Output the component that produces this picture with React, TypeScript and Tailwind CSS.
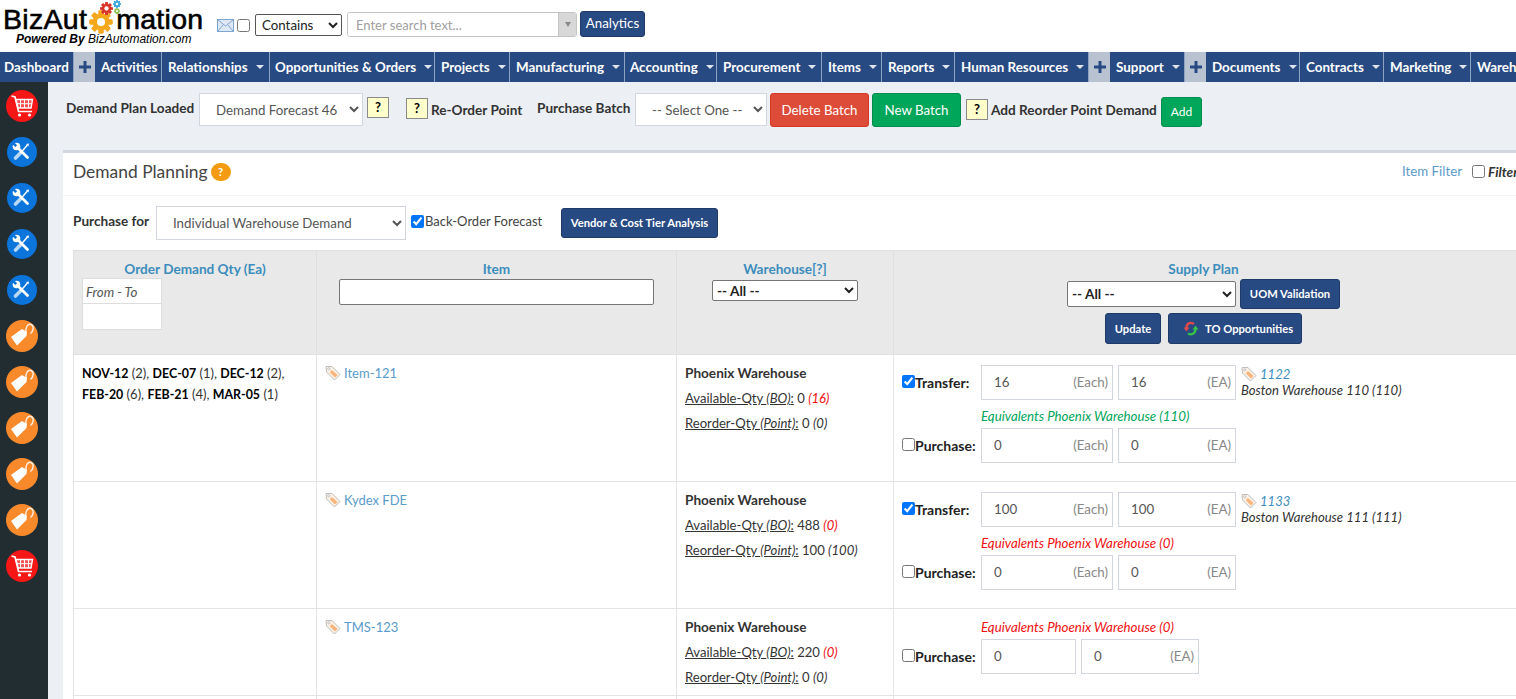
// top menu, widths read from the screenshot
const NAV = [
  { label: 'Dashboard', w: 'w-[74px] pl-[4px]', caret: false },
  { plus: true },
  { label: 'Activities', w: 'w-[67px] pl-[6px]', caret: false },
  { label: 'Relationships', w: 'w-[108px] pl-[6px]', caret: true },
  { label: 'Opportunities & Orders', w: 'w-[165px] pl-[5px]', caret: true },
  { label: 'Projects', w: 'w-[75px] pl-[6px]', caret: true },
  { label: 'Manufacturing', w: 'w-[115px] pl-[6px]', caret: true },
  { label: 'Accounting', w: 'w-[92px] pl-[5px]', caret: true },
  { label: 'Procurement', w: 'w-[105px] pl-[6px]', caret: true },
  { label: 'Items', w: 'w-[60px] pl-[6px]', caret: true },
  { label: 'Reports', w: 'w-[73px] pl-[6px]', caret: true },
  { label: 'Human Resources', w: 'w-[134px] pl-[6px]', caret: true },
  { plus: true },
  { label: 'Support', w: 'w-[75px] pl-[6px]', caret: true },
  { plus: true },
  { label: 'Documents', w: 'w-[94px] pl-[6px]', caret: true },
  { label: 'Contracts', w: 'w-[84px] pl-[6px]', caret: true },
  { label: 'Marketing', w: 'w-[87px] pl-[6px]', caret: true },
  { label: 'Warehouses', w: 'w-[100px] pl-[6px]', caret: true },
];

const SIDE = ['cart', 'tool', 'tool', 'tool', 'tool', 'tag', 'tag', 'tag', 'tag', 'tag', 'cart'];

function Gear({ size, color, hole = 'white' }: { size: number; color: string; hole?: string }) {
  const teeth = [0, 45, 90, 135, 180, 225, 270, 315];
  return (
    <svg width={size} height={size} viewBox="0 0 24 24">
      {teeth.map((a) => (
        <rect key={a} x="9.5" y="0.5" width="5" height="23" rx="1" fill={color} transform={`rotate(${a} 12 12)`} />
      ))}
      <circle cx="12" cy="12" r="8.5" fill={color} />
      <circle cx="12" cy="12" r="4" fill={hole} />
    </svg>
  );
}

function Logo() {
  return (
    <div className="relative w-[205px] pl-[3px] leading-none">
      <div className="flex items-center font-['Liberation_Sans',sans-serif] text-[28.5px] leading-[32px] tracking-[0.3px] text-black [-webkit-text-stroke:0.6px_black]">
        <span>BizAut</span>
        <span className="w-[29px]" />
        <span>mation</span>
      </div>
      <div className="absolute left-[89px] top-[7px]">
        <Gear size={24} color="#f5a81c" />
      </div>
      <div className="absolute left-[100px] top-[-1px]">
        <Gear size={13} color="#d8352b" />
      </div>
      <div className="absolute left-[113px] top-[-3px]">
        <Gear size={8} color="#39a6dc" />
      </div>
      <div className="absolute left-[114px] top-[5px]">
        <Gear size={6} color="#8cc152" />
      </div>
      <div className="-mt-[2px] pl-[13px] font-['Liberation_Sans',sans-serif] text-[12px] italic leading-[13px] text-black">
        <span className="font-bold">Powered By</span> BizAutomation.com
      </div>
    </div>
  );
}

function SmallTag() {
  return (
    <svg width="16" height="16" viewBox="0 0 16 16" className="shrink-0">
      <path d="M1 1.5 L7 1.5 L15 9.5 L9.5 15 L1.5 7 Z" fill="#fdf0e4" stroke="#bdbdbd" strokeWidth="1" />
      <path d="M6 5.5 L7.5 5.5 L12.5 10 L10 12.5 L5 7.5 Z" fill="#f8b47c" />
      <circle cx="3.8" cy="3.8" r="1.1" fill="white" stroke="#a5a5a5" strokeWidth="0.6" />
    </svg>
  );
}

function SideIcon({ kind }: { kind: string }) {
  if (kind === 'cart') {
    return (
      <div className="flex h-8 w-8 items-center justify-center rounded-full bg-[#f51616]">
        <svg width="32" height="32" viewBox="0 0 32 32" fill="none" stroke="white">
          <path d="M5.5 6 L9 7 L12.5 21.5 L26 21.5" strokeWidth="1.6" />
          <path d="M10 9.5 L26.5 9.5 L25 18 L12 18 Z" fill="white" fillOpacity="0.25" strokeWidth="1.4" />
          <path d="M14.5 9.5 V18 M18.5 9.5 V18 M22.5 9.5 V18 M11 13.7 H26" strokeWidth="1" />
          <circle cx="13.5" cy="25" r="1.6" fill="white" stroke="none" />
          <circle cx="23.5" cy="25" r="1.6" fill="white" stroke="none" />
        </svg>
      </div>
    );
  }
  if (kind === 'tool') {
    return (
      <div className="flex h-[30px] w-[30px] items-center justify-center rounded-full bg-[#0b75dc]">
        <svg width="30" height="30" viewBox="0 0 30 30" fill="none" strokeLinecap="round">
          {/* screwdriver */}
          <path d="M8.5 21 L13.5 16" stroke="#b9d9f7" strokeWidth="3.6" />
          <path d="M14 15.5 L20 8.5" stroke="white" strokeWidth="1.4" />
          <path d="M19 7 L22 6.5 L21.5 9.5 Z" fill="white" />
          {/* wrench */}
          <path d="M10 10 L20.5 20.5" stroke="white" strokeWidth="2.8" />
          <circle cx="9.5" cy="9.5" r="3.8" fill="white" />
          <path d="M5.5 5.5 L9.2 9.2" stroke="#0b75dc" strokeWidth="2.6" strokeLinecap="butt" />
        </svg>
      </div>
    );
  }
  return (
    <div className="flex h-8 w-8 items-center justify-center rounded-full bg-[#f98a2c]">
      <svg width="32" height="32" viewBox="0 0 32 32">
        <path d="M5 17 L16 9 L21 12 L20.5 16 L11 25.5 Z" fill="white" />
        <path d="M20 13 C19 7 22 3.5 25 4.5 C28.5 6 27.5 11 24.5 13.5" fill="none" stroke="white" strokeWidth="1.4" opacity="0.85" />
      </svg>
    </div>
  );
}

function HelpBox({ className = '' }: { className?: string }) {
  return (
    <div className={`flex h-[21px] w-[22px] shrink-0 items-center justify-center border border-[#8a8a8a] bg-[#ffffcc] text-[13px] font-bold text-black ${className}`}>
      ?
    </div>
  );
}

function QtyBox({ value, unit, w }: { value: string; unit?: string; w: string }) {
  return (
    <div className={`flex h-[35px] items-center justify-between border border-[#d2d6de] bg-white pl-[12px] pr-[4px] text-[13.3px] text-[#555] ${w}`}>
      <span>{value}</span>
      {unit && <span className="text-[#888]">{unit}</span>}
    </div>
  );
}

function SupplyLine({ label, checked, children }: { label: string; checked?: boolean; children: React.ReactNode }) {
  return (
    <div className="flex items-start">
      <label className="flex w-[79px] items-center pt-[7px] text-[14px] font-bold text-[#222]">
        <input type="checkbox" defaultChecked={checked} className="m-0 mb-[3px] h-[13px] w-[13px]" />
        {label}
      </label>
      <div className="flex gap-[5px]">{children}</div>
    </div>
  );
}

function SourceLink({ id, wh }: { id: string; wh: string }) {
  return (
    <div className="ml-[5px] pt-[1px] text-[13.1px] leading-[16px] text-[#333]">
      <div className="flex items-center gap-[3px]">
        <SmallTag />
        <a className="italic text-[#3c8dbc]">{id}</a>
      </div>
      <div className="italic">{wh}</div>
    </div>
  );
}

function WarehouseCell({ avail, bo, reorder, point }: { avail: string; bo: string; reorder: string; point: string }) {
  return (
    <td className="border border-[#e4e4e4] px-[8px] pt-[6px] align-top text-[13.1px] leading-[25px] text-[#333]">
      <div className="text-[13.6px] font-bold">Phoenix Warehouse</div>
      <div>
        <span className="underline">Available-Qty <i>(BO)</i>:</span> {avail}{' '}
        <i className="text-[#f01010]">{bo}</i>
      </div>
      <div>
        <span className="underline">Reorder-Qty <i>(Point)</i>:</span> {reorder} <i>{point}</i>
      </div>
    </td>
  );
}

function ItemCell({ name }: { name: string }) {
  return (
    <td className="border border-[#e4e4e4] px-[8px] pt-[8px] align-top text-[13px] leading-[20px]">
      <div className="flex items-center gap-[3px] text-[#5a9bc9]">
        <SmallTag />
        {name}
      </div>
    </td>
  );
}

const th = 'border border-[#e0e0e0] px-[8px] pt-[10px] align-top text-center text-[13.6px] font-bold leading-[16px] text-[#3c8dbc]';
const navy = 'rounded-[3px] border border-[#1d3a69] bg-[#284a83] text-[11.2px] font-bold text-white';

export default function App() {
  return (
    <div className="flex h-[699px] w-[1516px] flex-col overflow-hidden bg-white font-[Lato,sans-serif] text-[13.3px] text-[#333]">
      {/* top bar */}
      <div className="flex h-[52px] shrink-0 items-start">
        <div className="pt-[3px]">
          <Logo />
        </div>
        <div className="ml-[12px] flex items-center pt-[11px]">
          <svg width="17" height="13" viewBox="0 0 17 13" className="mt-[2px] shrink-0">
            <rect x="0.5" y="0.5" width="16" height="12" fill="#dfe9f6" stroke="#7ea6d3" />
            <path d="M1 1 L8.5 7 L16 1 M1 12 L6 6 M16 12 L11 6" fill="none" stroke="#7ea6d3" />
          </svg>
          <input type="checkbox" className="ml-[3px] mt-[2px] h-[13px] w-[13px]" />
          <select className="ml-[5px] mt-[2px] h-[22px] w-[87px] rounded-[2px] border border-[#555] bg-white pl-[2px] text-[13.3px] text-[#222]">
            <option>Contains</option>
          </select>
          <div className="ml-[5px] flex h-[25px] w-[230px] overflow-hidden rounded-[3px] border border-[#c4c4c4]">
            <div className="flex-1 bg-white pl-[8px] text-[13px] leading-[25px] text-[#a0a0a0]">Enter search text...</div>
            <div className="flex w-[18px] items-center justify-center border-l border-[#c4c4c4] bg-[#d8d8d8]">
              <div className="h-0 w-0 border-x-[3px] border-t-[5px] border-x-transparent border-t-[#888]" />
            </div>
          </div>
          <button className="ml-[3px] h-[26px] w-[65px] rounded-[3px] border border-[#1d3a69] bg-[#284a83] text-[13.3px] text-white">Analytics</button>
        </div>
      </div>

      {/* main menu */}
      <div className="flex h-[30px] shrink-0 bg-[#284a83] text-[13.4px] font-bold text-white">
        {NAV.map((n, i) =>
          n.plus ? (
            <div key={i} className="flex w-[21px] shrink-0 items-center justify-center bg-[#b9c2d0]">
              <svg width="12" height="12" viewBox="0 0 12 12">
                <path d="M6 0 V12 M0 6 H12" stroke="#284a83" strokeWidth="3" />
              </svg>
            </div>
          ) : (
            <div key={i} className={`flex shrink-0 items-center gap-[8px] whitespace-nowrap border-r border-[#8ea2c2] ${n.w}`}>
              {n.label}
              {n.caret && <span className="h-0 w-0 border-x-[4px] border-t-[4px] border-x-transparent border-t-[#dfe5ee]" />}
            </div>
          ),
        )}
      </div>

      <div className="flex min-h-0 flex-1">
        {/* left icon rail */}
        <div className="flex w-[48px] shrink-0 flex-col bg-[#222d32] pl-[6px] pt-[1px]">
          {SIDE.map((k, i) => (
            <div key={i} className="flex h-[46px] w-[32px] shrink-0 items-center justify-center">
              <SideIcon kind={k} />
            </div>
          ))}
        </div>

        <div className="min-w-0 flex-1 bg-[#ecf0f5] pl-[15px]">
          {/* batch toolbar */}
          <div className="flex h-[68px] items-start pl-[3px] pt-[11px] text-[13.6px] font-bold text-[#333]">
            <span className="mr-[3px] mt-[5px] w-[130px] whitespace-nowrap">Demand Plan Loaded</span>
            <select className="h-[33px] w-[164px] border border-[#d2d6de] bg-white pl-[12px] text-[13.3px] font-normal text-[#555]">
              <option>Demand Forecast 46</option>
            </select>
            <HelpBox className="ml-[4px] mt-[4px]" />
            <HelpBox className="ml-[17px] mt-[5px]" />
            <span className="ml-[3px] mt-[7px] w-[106px] whitespace-nowrap">Re-Order Point</span>
            <span className="mr-[3px] mt-[5px] w-[95px] whitespace-nowrap">Purchase Batch</span>
            <select className="h-[33px] w-[132px] border border-[#d2d6de] bg-white pl-[12px] text-[13.3px] font-normal text-[#555]">
              <option>-- Select One --</option>
            </select>
            <button className="ml-[3px] h-[34px] w-[99px] rounded-[3px] border border-[#d73925] bg-[#dd4b39] pt-[1px] text-[13.3px] font-normal text-white">Delete Batch</button>
            <button className="ml-[3px] h-[34px] w-[89px] rounded-[3px] border border-[#008d4c] bg-[#00a65a] pt-[1px] text-[13.3px] font-normal text-white">New Batch</button>
            <HelpBox className="ml-[5px] mt-[6px]" />
            <span className="ml-[3px] mt-[7px] w-[167px] whitespace-nowrap">Add Reorder Point Demand</span>
            <button className="ml-[3px] mt-[4px] h-[30px] w-[41px] rounded-[3px] border border-[#008d4c] bg-[#00a65a] text-[12px] font-normal text-white">Add</button>
          </div>

          {/* card */}
          <div className="w-[1500px] border-t-[3px] border-[#d2d6de] bg-white">
            <div className="flex h-[43px] items-center border-b border-[#f4f4f4] pb-[4px] pl-[10px]">
              <span className="text-[17.4px] text-[#444]">Demand Planning</span>
              <span className="ml-[3px] flex h-[18px] w-[20px] items-center justify-center rounded-full bg-[#f39c12] text-[11px] font-bold text-white">?</span>
              <div className="ml-auto flex items-center pr-[47px]">
                <span className="text-[13.3px] text-[#5a9bc9]">Item Filter</span>
                <input type="checkbox" className="ml-[10px] h-[13px] w-[13px]" />
                <span className="ml-[3px] w-[28px] overflow-hidden text-[13.6px] font-bold italic text-[#333]">Filter</span>
              </div>
            </div>

            <div className="flex h-[54px] items-start pl-[10px] pt-[10px]">
              <span className="mt-[5px] w-[83px] text-[13.6px] font-bold text-[#333]">Purchase for</span>
              <select className="h-[34px] w-[250px] border border-[#d2d6de] bg-white pl-[12px] text-[13.3px] text-[#555]">
                <option>Individual Warehouse Demand</option>
              </select>
              <label className="ml-[5px] mt-[8px] flex h-[16px] w-[150px] items-center whitespace-nowrap text-[13px] text-[#444]">
                <input type="checkbox" defaultChecked className="m-0 mb-[2px] mr-[1px] h-[13px] w-[13px]" />
                Back-Order Forecast
              </label>
              <button className={`mt-[2px] h-[30px] w-[157px] ${navy}`}>Vendor &amp; Cost Tier Analysis</button>
            </div>

            <div className="pl-[10px]">
              <table className="w-[1444px] table-fixed border-collapse">
                <colgroup>
                  <col className="w-[243px]" />
                  <col className="w-[360px]" />
                  <col className="w-[217px]" />
                  <col className="w-[624px]" />
                </colgroup>
                <thead>
                  <tr className="h-[104px] bg-[#e9e9e9]">
                    <th className={th}>
                      Order Demand Qty (Ea)
                      <div className="mt-[1px] w-[80px] border border-[#ddd] bg-white text-left font-normal">
                        <div className="h-[25px] border-b border-[#ddd] pl-[3px] text-[13.3px] italic leading-[27px] text-[#555]">From - To</div>
                        <div className="h-[25px]" />
                      </div>
                    </th>
                    <th className={th}>
                      Item
                      <input className="mx-auto mt-[2px] block h-[26px] w-[315px] rounded-[2px] border border-[#767676] bg-white" />
                    </th>
                    <th className={th}>
                      Warehouse[?]
                      <select className="mt-[3px] h-[21px] w-[146px] rounded-[2px] border border-[#767676] bg-white text-left text-[13.6px] font-bold text-[#222]">
                        <option>-- All --</option>
                      </select>
                    </th>
                    <th className={th}>
                      <div className="pr-[4px]">
                        Supply Plan
                        <div className="mt-[2px] flex items-center justify-center gap-[4px]">
                          <select className="h-[26px] w-[169px] rounded-[2px] border border-[#767676] bg-white text-[13.6px] font-bold text-[#222]">
                            <option>-- All --</option>
                          </select>
                          <button className={`h-[30px] w-[100px] ${navy}`}>UOM Validation</button>
                        </div>
                        <div className="mt-[4px] flex items-center justify-center gap-[7px]">
                          <button className={`h-[31px] w-[56px] ${navy}`}>Update</button>
                          <button className={`flex h-[31px] w-[134px] items-center justify-start gap-[6px] pl-[14px] ${navy}`}>
                            <svg width="16" height="17" viewBox="0 0 16 17" fill="none">
                              <path d="M11 4 C7 1.5 3.5 3.5 3.5 8" stroke="#e0484a" strokeWidth="2.4" />
                              <path d="M0.5 7.5 L6.5 7.5 L3.5 11.5 Z" fill="#e0484a" />
                              <path d="M5 13.5 C9 15.5 12.5 13 12.5 9" stroke="#35c04a" strokeWidth="2.4" />
                              <path d="M9.5 9.5 L15.5 9.5 L12.5 5.5 Z" fill="#35c04a" />
                            </svg>
                            TO Opportunities
                          </button>
                        </div>
                      </div>
                    </th>
                  </tr>
                </thead>
                <tbody>
                  <tr className="h-[127px]">
                    <td className="border border-[#e4e4e4] px-[8px] pt-[8px] align-top text-[13px] leading-[20px] text-[#333] [&_b]:text-[12.4px] [&_b]:text-black">
                      <b>NOV-12</b> (2), <b>DEC-07</b> (1), <b>DEC-12</b> (2),
                      <br />
                      <b>FEB-20</b> (6), <b>FEB-21</b> (4), <b>MAR-05</b> (1)
                    </td>
                    <ItemCell name="Item-121" />
                    <WarehouseCell avail="0" bo="(16)" reorder="0" point="(0)" />
                    <td className="border border-[#e4e4e4] px-[8px] pt-[10px] align-top">
                      <div className="flex">
                        <SupplyLine label="Transfer:" checked>
                          <QtyBox value="16" unit="(Each)" w="w-[132px]" />
                          <QtyBox value="16" unit="(EA)" w="w-[118px]" />
                        </SupplyLine>
                        <SourceLink id="1122" wh="Boston Warehouse 110 (110)" />
                      </div>
                      <div className="mt-[6px] pl-[79px] text-[13.3px] italic leading-[20px] text-[#00a65a]">Equivalents Phoenix Warehouse (110)</div>
                      <div className="mt-[2px]">
                        <SupplyLine label="Purchase:">
                          <QtyBox value="0" unit="(Each)" w="w-[132px]" />
                          <QtyBox value="0" unit="(EA)" w="w-[118px]" />
                        </SupplyLine>
                      </div>
                    </td>
                  </tr>
                  <tr className="h-[127px]">
                    <td className="border border-[#e4e4e4]" />
                    <ItemCell name="Kydex FDE" />
                    <WarehouseCell avail="488" bo="(0)" reorder="100" point="(100)" />
                    <td className="border border-[#e4e4e4] px-[8px] pt-[10px] align-top">
                      <div className="flex">
                        <SupplyLine label="Transfer:" checked>
                          <QtyBox value="100" unit="(Each)" w="w-[132px]" />
                          <QtyBox value="100" unit="(EA)" w="w-[118px]" />
                        </SupplyLine>
                        <SourceLink id="1133" wh="Boston Warehouse 111 (111)" />
                      </div>
                      <div className="mt-[6px] pl-[79px] text-[13.3px] italic leading-[20px] text-[#f01010]">Equivalents Phoenix Warehouse (0)</div>
                      <div className="mt-[2px]">
                        <SupplyLine label="Purchase:">
                          <QtyBox value="0" unit="(Each)" w="w-[132px]" />
                          <QtyBox value="0" unit="(EA)" w="w-[118px]" />
                        </SupplyLine>
                      </div>
                    </td>
                  </tr>
                  <tr className="h-[87px]">
                    <td className="border border-[#e4e4e4]" />
                    <ItemCell name="TMS-123" />
                    <WarehouseCell avail="220" bo="(0)" reorder="0" point="(0)" />
                    <td className="border border-[#e4e4e4] px-[8px] pt-[8px] align-top">
                      <div className="pl-[79px] text-[13.3px] italic leading-[20px] text-[#f01010]">Equivalents Phoenix Warehouse (0)</div>
                      <div className="mt-[2px]">
                        <SupplyLine label="Purchase:">
                          <QtyBox value="0" w="w-[95px]" />
                          <QtyBox value="0" unit="(EA)" w="w-[118px]" />
                        </SupplyLine>
                      </div>
                    </td>
                  </tr>
                  <tr className="h-[40px]">
                    <td className="border border-[#e4e4e4]" />
                    <td className="border border-[#e4e4e4]" />
                    <td className="border border-[#e4e4e4]" />
                    <td className="border border-[#e4e4e4]" />
                  </tr>
                </tbody>
              </table>
            </div>
          </div>
        </div>
      </div>
    </div>
  );
}
